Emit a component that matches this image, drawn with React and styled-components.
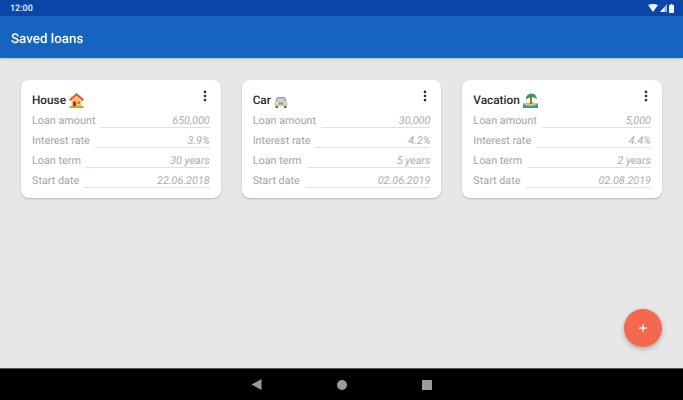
import React from "react";
import styled, { createGlobalStyle } from "styled-components";
import { MoreVertical, Plus } from "lucide-react";

const GlobalStyle = createGlobalStyle`
  html, body {
    margin: 0;
    padding: 0;
    background: #e6e6e6;
    font-family: Roboto, "Liberation Sans", sans-serif;
    text-rendering: geometricPrecision;
  }
`;

const Screen = styled.div`
  display: flex;
  flex-direction: column;
  width: 683px;
  height: 400px;
  overflow: hidden;
  filter: blur(0.5px);
`;

const StatusBar = styled.div`
  flex: 0 0 16px;
  display: flex;
  align-items: center;
  justify-content: space-between;
  padding: 1px 9px 0 10px;
  box-sizing: border-box;
  background: #0a45a8;
  color: #eef3fb;
  font-size: 9px;
  font-weight: 500;
`;

const StatusIcons = styled.div`
  display: flex;
  align-items: center;
  gap: 2px;
  margin-top: -1px;
`;

const AppBar = styled.header`
  flex: 0 0 42px;
  display: flex;
  align-items: center;
  padding: 4px 11px 0;
  box-sizing: border-box;
  background: #1565c0;
  color: #fff;
  font-size: 13.4px;
  font-weight: 500;
  box-shadow: 0 1px 2px rgba(0, 0, 0, 0.2);
  z-index: 1;
`;

const Main = styled.main`
  position: relative;
  flex: 1;
  background: #e7e7e7;
`;

const CardGrid = styled.div`
  display: grid;
  grid-template-columns: repeat(3, 1fr);
  gap: 21px;
  padding: 22px 21px;
`;

const Card = styled.section`
  height: 118px;
  box-sizing: border-box;
  padding: 10px 11px 0 11px;
  background: #fff;
  border-radius: 8px;
  box-shadow: 0 1px 2px rgba(0, 0, 0, 0.22);
`;

const CardHeader = styled.div`
  display: flex;
  justify-content: space-between;
  height: 20px;
`;

const Title = styled.h2`
  display: flex;
  align-items: center;
  gap: 3px;
  height: 20px;
  margin: 0;
  color: #2a2a2a;
  font-size: 11.8px;
  font-weight: 500;
`;

const MenuButton = styled.div`
  display: flex;
  margin: -1px -2px 0 0;
  color: #2a2a2a;
`;

const Row = styled.div`
  display: flex;
  align-items: flex-start;
  height: 20px;
  font-size: 10.8px;
  line-height: 22px;
  color: #a3a3a3;
`;

const Label = styled.span`
  white-space: nowrap;
`;

const Value = styled.span`
  flex: 1;
  height: 17px;
  margin-left: 5px;
  border-bottom: 1px solid #e0e0e0;
  color: #adadad;
  text-align: right;
  font-style: italic;
`;

const Fab = styled.button`
  position: absolute;
  right: 21px;
  bottom: 21px;
  display: flex;
  align-items: center;
  justify-content: center;
  width: 38px;
  height: 38px;
  padding: 0;
  border: none;
  border-radius: 50%;
  background: #f4684f;
  color: #fff;
  box-shadow: 0 2px 5px rgba(0, 0, 0, 0.28);
`;

const NavBar = styled.nav`
  flex: 0 0 32px;
  display: flex;
  align-items: center;
  justify-content: center;
  gap: 75px;
  padding-right: 1px;
  background: #000;
  border-top: 1px solid #555;
  box-sizing: border-box;
`;

const WifiIcon = () => (
  <svg width="10" height="8" viewBox="0 0 10 8">
    <path d="M0 1 Q5 -1 10 1 L5 8 Z" fill="#eef3fb" />
  </svg>
);

const SignalIcon = () => (
  <svg width="7" height="8" viewBox="0 0 7 8">
    <path d="M7 0 V8 H0 Z" fill="#9db6e0" />
    <path d="M4.5 3 V8 H0 Z" fill="#eef3fb" />
  </svg>
);

const BatteryIcon = () => (
  <svg width="5" height="9" viewBox="0 0 5 9">
    <path d="M1.5 0 H3.5 V1 H5 V9 H0 V1 H1.5 Z" fill="#eef3fb" />
  </svg>
);

const HouseEmoji = () => (
  <svg width="15" height="15" viewBox="0 0 15 15">
    <path d="M7.5 0 L15 6.5 L13.5 8 L7.5 3 L1.5 8 L0 6.5 Z" fill="#e05a2c" />
    <path d="M2.5 7.5 L7.5 3 L12.5 7.5 V13 H2.5 Z" fill="#f4c47a" />
    <rect x="4" y="8.5" width="3" height="4.5" fill="#c8281e" />
    <rect x="8.5" y="8.5" width="2.5" height="2.5" fill="#d9762e" />
    <rect x="0.5" y="13" width="14" height="2" fill="#a8b03c" />
  </svg>
);

const CarEmoji = () => (
  <svg width="14" height="15" viewBox="0 0 14 15">
    <path d="M2.5 5 Q3 4 4.5 4 H9.5 Q11 4 11.5 5 L12.5 8.5 H1.5 Z" fill="#84a0ae" />
    <path d="M3.6 5.2 H10.4 L11 8.5 H3 Z" fill="#c5d6dc" />
    <rect x="0.5" y="8.5" width="13" height="4.5" rx="1.5" fill="#cfc6a6" />
    <circle cx="2.8" cy="10.5" r="1.1" fill="#f4ecc0" />
    <circle cx="11.2" cy="10.5" r="1.1" fill="#f4ecc0" />
    <rect x="4.8" y="9.8" width="4.4" height="1.6" fill="#8f9a96" />
    <rect x="1.5" y="13" width="2.4" height="2" fill="#5a6468" />
    <rect x="10.1" y="13" width="2.4" height="2" fill="#5a6468" />
  </svg>
);

const IslandEmoji = () => (
  <svg width="15" height="15" viewBox="0 0 15 15">
    <rect x="0" y="10.5" width="15" height="4.5" fill="#3f8fb8" />
    <ellipse cx="7.5" cy="11" rx="6.5" ry="1.8" fill="#e6c45c" />
    <rect x="7.2" y="4" width="1.6" height="7" fill="#7a5a30" />
    <path d="M8 0.5 L11 1 L13 3 L14 6.5 L11.5 4.5 L8 4.5 L5 5 L3.5 7 L3 4 L5 1.5 Z" fill="#3f9a48" />
  </svg>
);

const BackIcon = () => (
  <svg width="11" height="11" viewBox="0 0 11 11">
    <path d="M10.5 0 V11 L0.5 5.5 Z" fill="#9a9a9a" />
  </svg>
);

const HomeIcon = () => (
  <svg width="10" height="10" viewBox="0 0 10 10">
    <circle cx="5" cy="5" r="5" fill="#9a9a9a" />
  </svg>
);

const RecentIcon = () => (
  <svg width="10" height="10" viewBox="0 0 10 10">
    <rect width="10" height="10" fill="#9a9a9a" />
  </svg>
);

const loans = [
  { title: "House", emoji: <HouseEmoji />, amount: "650,000", rate: "3.9%", term: "30 years", start: "22.06.2018" },
  { title: "Car", emoji: <CarEmoji />, amount: "30,000", rate: "4.2%", term: "5 years", start: "02.06.2019" },
  { title: "Vacation", emoji: <IslandEmoji />, amount: "5,000", rate: "4.4%", term: "2 years", start: "02.08.2019" },
];

const App = () => (
  <Screen>
    <GlobalStyle />
    <StatusBar>
      <span>12:00</span>
      <StatusIcons>
        <WifiIcon />
        <SignalIcon />
        <BatteryIcon />
      </StatusIcons>
    </StatusBar>
    <AppBar>Saved loans</AppBar>
    <Main>
      <CardGrid>
        {loans.map((loan) => (
          <Card key={loan.title}>
            <CardHeader>
              <Title>
                {loan.title} {loan.emoji}
              </Title>
              <MenuButton>
                <MoreVertical size={14} strokeWidth={2.6} />
              </MenuButton>
            </CardHeader>
            <Row>
              <Label>Loan amount</Label>
              <Value>{loan.amount}</Value>
            </Row>
            <Row>
              <Label>Interest rate</Label>
              <Value>{loan.rate}</Value>
            </Row>
            <Row>
              <Label>Loan term</Label>
              <Value>{loan.term}</Value>
            </Row>
            <Row>
              <Label>Start date</Label>
              <Value>{loan.start}</Value>
            </Row>
          </Card>
        ))}
      </CardGrid>
      <Fab>
        <Plus size={12} strokeWidth={2.5} />
      </Fab>
    </Main>
    <NavBar>
      <BackIcon />
      <HomeIcon />
      <RecentIcon />
    </NavBar>
  </Screen>
);

export default App;
